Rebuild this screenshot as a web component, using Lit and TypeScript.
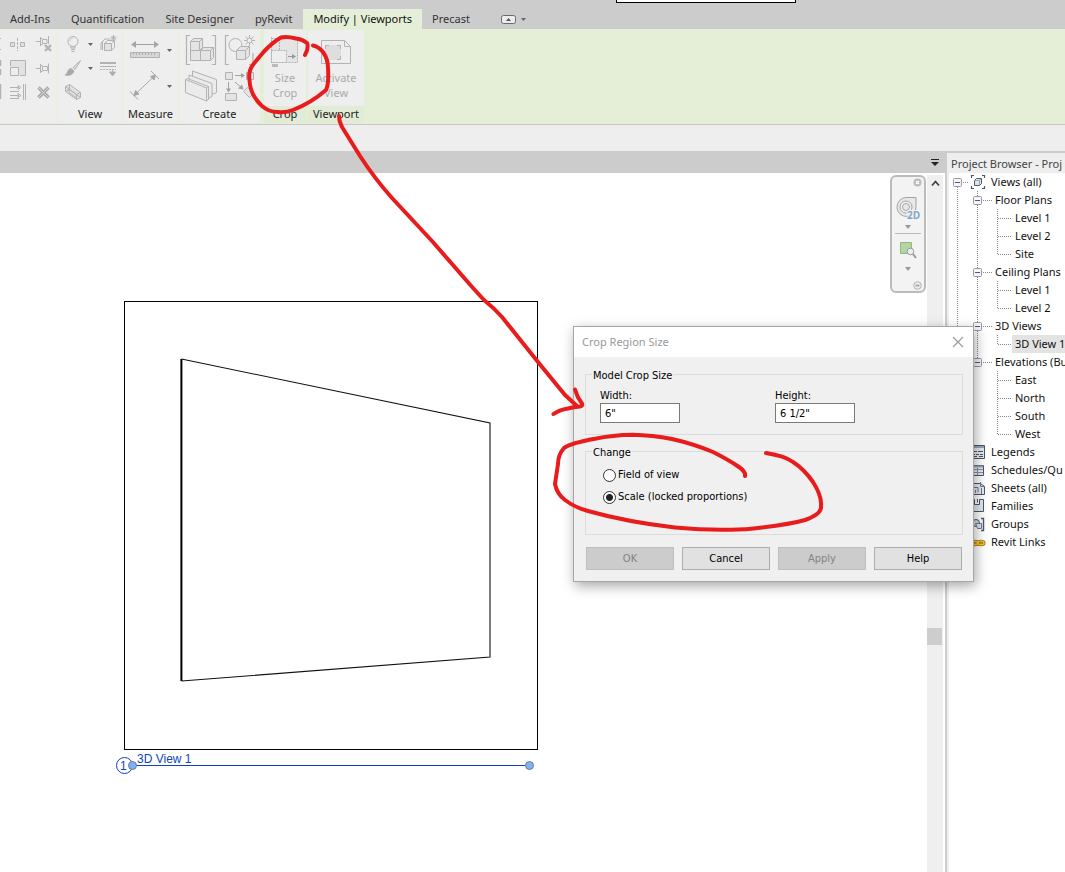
import { LitElement, html, svg, css, nothing } from "lit";
import { customElement, property, state } from "lit/decorators.js";

type Glyph = unknown;
const icon = (w: number, h: number, body: Glyph) =>
  html`<svg width=${w} height=${h} viewBox="0 0 ${w} ${h}" fill="none" stroke="#b2b2b2" aria-hidden="true">${body}</svg>`;

const cube = (x: number, y: number, s: number, d: number, fill = "#e4e4e4") => svg`
  <path d="M${x} ${y + d}l${d} ${-d}h${s}v${s}l${-d} ${d}h${-s}z" fill=${fill}/>
  <path d="M${x} ${y + d}h${s}v${s}M${x + s} ${y + d}l${d} ${-d}"/>`;

const arrow = html`<svg width="5" height="3" viewBox="0 0 5 3" aria-hidden="true"><path d="M0 0h5L2.500 3z" fill="#666"/></svg>`;

/* Ribbon glyphs, small ones on a 18px grid and large ones on a 32px grid */
const I = {
  edge1: icon(5, 18, svg`<path d="M0 3.500h1M0 14.500h1"/>`),
  edge2: icon(5, 18, svg`<path d="M.5 1v6M.5 10v6" stroke-width="1.500"/>`),
  edge3: icon(5, 18, svg`<path d="M.5 1v15" stroke-width="1.500"/>`),
  mirror: icon(18, 18, svg`<path d="M1.500 7.500h4v4h-4zM11.500 7.500h4v4h-4z" fill="#e0e0e0"/><path d="M8.500 3v13" stroke-dasharray="3 1"/>`),
  scale: icon(18, 18, svg`<path d="M1.500 7V1.500h15v15H11" fill="#e2e2e2"/><path d="M1.500 8.500h8v8h-8z" fill="#eee"/>`),
  align: icon(18, 18, svg`<path d="M14.500 1v16M16.500 1v16M1 4.500h9M1 8.500h9M1 12.500h9M1 15.500h9M9 2.500l3 2-3 2zM9 10.500l3 2-3 2z"/>`),
  unpin: icon(18, 18, svg`<path d="M1 6.500h4M5.500 2v9M7.500 4.500h4.500v4h-4.500zM5.500 3.500h2M5.500 9.500h2M13.500 1v8" fill="#eee"/><path d="M10 10l6 6M16 10l-6 6" stroke-width="2.400"/>`),
  pin: icon(18, 18, svg`<path d="M1 9.500h4M5.500 5v9M5.500 6.500h2M5.500 12.500h2M7.500 7.500h5v4h-5zM13.500 4.500v10"/>`),
  del: icon(18, 18, svg`<path d="M3.500 4.500l10 10M13.500 4.500l-10 10" stroke="#aaa" stroke-width="3.600"/><path d="M4 5l9 9M13 5l-9 9" stroke="#d2d2d2"/>`),
  bulb: icon(18, 18, svg`<circle cx="9" cy="6.500" r="5" fill="#eee"/><path d="M7 11v2h4v-2M7 14.500h4M7.500 16.500h3" /><path d="M6 6a3 3 0 0 1 3-3" stroke="#ccc"/>`),
  brush: icon(18, 18, svg`<path d="M16.500 1.500L9 8.500l2 2z" fill="#ddd"/><path d="M1 16c3-1 2-6 6-6.500l3 2.500c-1 4-5 5-9 4z" fill="#a8a8a8"/>`),
  box: icon(18, 18, svg`<path d="M1.500 3.500l4-2 11 8v5l-4 2-11-8z" fill="#e2e2e2"/><path d="M1.500 3.500l11 8v5M12.500 11.500l4-2M5.500 1.500v5l11 8M5 4.500v5l7 5M1.500 8.500l4-2"/>`),
  hide: icon(18, 18, svg`<path d="M5.500 8.500h7v7h-7z" fill="#e2e2e2"/><path d="M5.500 8.500l3-3h7v7l-3 3M12.500 8.500l3-3M2 15V8l4-4h5M14.500 0v6M11.500 3h6M12.500 1l4 4M16.500 1l-4 4M3.500 6v9"/>`),
  thin: icon(18, 18, svg`<path d="M1 4h16" stroke-width="2"/><path d="M1 7.500h16"/><path d="M1 10.500h16" stroke-dasharray="2 1"/><path d="M13.500 10v5M10.500 13l3 4 3-4z" fill="#aaa"/>`),
  ruler: icon(32, 30, svg`<path d="M3 9.500h25" stroke="#a0a0a0"/><path d="M2 9.500l5-3.500v7zM30 9.500l-5-3.500v7z" fill="#a6a6a6" stroke="none"/><path d="M1.500 17.500h29v5h-29z" fill="#d6d6d6"/><path d="M4.500 18v2M7.500 18v2M10.500 18v2M13.500 18v2M16.500 18v2M19.500 18v2M22.500 18v2M25.500 18v2"/>`),
  dim: icon(32, 32, svg`<g stroke="#a6a6a6"><path d="M5 25.500L26 5.500"/><path d="M5 25.500l1.500-5 3.500 3.500zM26.500 5l-5 1.500 3.500 3.500z" fill="#a6a6a6"/><path d="M1 21.500l8 8M22 1l8 8"/></g>`),
  group: icon(32, 32, svg`<path d="M5 1.500H1.500v29H5M27 1.500h3.500v29H27" stroke-width="1.200"/>${cube(5.5, 13.500, 10, 3)}${cube(5.5, 4.500, 9, 3)}${cube(15.5, 13.500, 10, 3)}`),
  similar: icon(32, 32, svg`<path d="M5 1.500H1.500v29H5M25 30.500h4V19" stroke-width="1.200"/><circle cx="11.500" cy="11" r="6.500" fill="#eee"/>${cube(12.5, 12.500, 9, 4)}<path d="M25.500 1v11M20 6.500h11M21.500 2.500l8 8M29.500 2.500l-8 8"/><circle cx="25.500" cy="6.500" r="2.500" fill="#eee"/>`),
  assembly: icon(34, 32, svg`<g fill="#ebebeb" stroke-linejoin="round"><path d="M8.500 1l24 8.500v13l-3 1.500-21-8z"/><path d="M5 5l23 8.500v13l-3 1.500L5 20z"/><path d="M1.500 9.500l2-1 21 8v13l-2 1.500-21-8.500z"/><path d="M1.500 9.500l21 8.500v13M22.500 18l2-1.500"/></g>`),
  parts: icon(34, 32, svg`<path d="M2.500 2.500h7v7h-7zM23.500 2.500h7v7h-7zM2.500 23.500h11v7h-11zM24.500 17.500l6 6-4 4-6-6z" fill="#e4e4e4"/><path d="M12 5.500h9M5.500 12v9M12 12l8 7" stroke="#a0a0a0"/><path d="M18 3l4 2.500-4 2.500zM3 18.500l2.500 4 2.500-4zM19 14.500l1.500 5-5.500-1z" fill="#a0a0a0" stroke="none"/>`),
  sizeCrop: icon(32, 32, svg`<path d="M2.500 2.500h26v24h-26z" fill="#e4e4e4" stroke-dasharray="2 1"/><path d="M2.500 14.500h15v12h-15z" fill="#eee" stroke-dasharray="2 1"/><path d="M10.500 3v11M2.500 1v27" stroke-dasharray="2 1"/><path d="M19 20.500h6" stroke="#999"/><path d="M23 18l4 2.500-4 2.500z" fill="#999" stroke="none"/><path d="M3 28h6v3H3z" fill="#bbb" stroke="none"/>`),
  activate: icon(32, 32, svg`<path d="M1.500 4.500h23l6 6v17h-29z" fill="#eee"/><path d="M24.500 4.500v6h6"/><path d="M5 9h16v15H5z" fill="#dedede" stroke="none"/><path d="M9 9.500H5.500V13M17 9.500h3.500V13M9 23.500H5.500V20M17 23.500h3.500V20"/>`),
};

/* Browser tree glyphs */
const S = "#4c5668";
const tree: Record<string, Glyph> = {
  views: svg`<path d="M4 1.500H1.500V4M12 1.500h2.500V4M4 14.500H1.500V12M12 14.500h2.500V12" stroke=${S} stroke-width="1.200"/><path d="M4.500 6.500l2-2h5v5l-2 2h-5z" fill="#dfe6ee" stroke=${S}/><path d="M4.500 6.500h5v5M9.500 6.500l2-2" stroke="#9aa5b4"/>`,
  legend: svg`<path d="M1.500 1.500h13v13h-13z" fill="#e8ecf2" stroke=${S}/><path d="M2 3h12" stroke="#97a3b3" stroke-width="2"/><path d="M2 7.500h5M8 7.500h5M2 10.500h3M6 10.500h3M10 10.500h3M2 12.500h5M9 12.500h4" stroke=${S}/>`,
  schedule: svg`<path d="M1.500 3.500h12v10h-12z" fill="#e8ecf2" stroke=${S}/><path d="M2 4.500h11" stroke="#97a3b3" stroke-width="2"/><path d="M2 7.500h11M2 10.500h11M7.500 6v7" stroke="#8993a3"/>`,
  sheet: svg`<path d="M1.500 3.500h9l4 3v8h-13z" fill="#e8ecf2" stroke=${S}/><path d="M10.500 2v4.500h4M3 7.500h5v5M5.500 13v-3M11.500 8v6" stroke="#6d7a8d"/>`,
  family: svg`<path d="M1.500 1.500h3v5h5v-5h4v12h-12z" fill="#e4e8ee" stroke=${S}/><path d="M7.500 1v3.500" stroke=${S}/>`,
  group: svg`<path d="M11 2.500h2.500v12H11" stroke=${S} stroke-width="1.400"/><circle cx="6" cy="7" r="3.500" fill="#cfd9e6" stroke=${S}/><path d="M5.500 7.500h6v5h-4z" fill="#dfe6ee" stroke="#6d7a8d"/>`,
  link: svg`<g stroke="#a87400" stroke-width="3"><ellipse cx="4.500" cy="9" rx="3" ry="1.800"/><ellipse cx="11" cy="9" rx="3" ry="1.800"/></g><g stroke="#f7cc3c" stroke-width="1.300"><ellipse cx="4.500" cy="9" rx="3" ry="1.800"/><ellipse cx="11" cy="9" rx="3" ry="1.800"/></g>`,
};

interface Row { t: string; d: number; i?: string; open?: boolean; last?: boolean; sel?: boolean }
const rows: Row[] = [
  { t: "Views (all)", d: 0, i: "views", open: true },
  { t: "Floor Plans", d: 1, open: true },
  { t: "Level 1", d: 2 }, { t: "Level 2", d: 2 }, { t: "Site", d: 2, last: true },
  { t: "Ceiling Plans", d: 1, open: true },
  { t: "Level 1", d: 2 }, { t: "Level 2", d: 2, last: true },
  { t: "3D Views", d: 1, open: true },
  { t: "3D View 1", d: 2, last: true, sel: true },
  { t: "Elevations (Bu", d: 1, open: true },
  { t: "East", d: 2 }, { t: "North", d: 2 }, { t: "South", d: 2 }, { t: "West", d: 2, last: true },
  { t: "Legends", d: 0, i: "legend" },
  { t: "Schedules/Qu", d: 0, i: "schedule" },
  { t: "Sheets (all)", d: 0, i: "sheet" },
  { t: "Families", d: 0, i: "family" },
  { t: "Groups", d: 0, i: "group" },
  { t: "Revit Links", d: 0, i: "link" },
];

@customElement("ribbon-bar")
class RibbonBar extends LitElement {
  static styles = css`
    :host { display: block; color: #333; font: 11px/16px "Noto Sans", "Open Sans", sans-serif; }
    button { font: inherit; color: inherit; background: none; border: 0; margin: 0; padding: 0; }
    svg { display: block; flex: none; }
    .tabs { display: flex; align-items: flex-end; height: 29px; background: #ccc; }
    .tab { height: 20px; padding: 0 11px 0 10px; white-space: nowrap; }
    .tab.on { background: #e5efd7; color: #111; padding: 0 10px; }
    .collapse { display: flex; align-items: center; gap: 5px; height: 19px; margin-left: 20px; }
    .ribbon { display: flex; height: 94px; background: #e5efd7; border-bottom: 1px solid #c8c8c8; padding-top: 1px; }
    .panel { display: flex; flex-direction: column; flex: none; margin: 0 1px 1px 0; background: #eee; }
    .body { display: flex; height: 76px; padding-top: 2px; box-sizing: border-box; }
    .name { margin: 0; text-align: center; font: inherit; color: #222; height: 16px; white-space: nowrap; }
    .context { background: #e2ebd5; }
    .context .body { background: #eee; justify-content: center; }
    .modify .body { display: grid; grid-template-columns: 5px 25px 27px; grid-auto-rows: 24px; align-items: center; justify-items: center; }
    .view .body { display: grid; grid-template-columns: 20px 12px 22px; column-gap: 1px; grid-auto-rows: 24px; padding-left: 5px; align-items: center; justify-items: center; }
    .view { width: 64px; }
    .measure { width: 55px; }
    .measure .body { display: grid; grid-template-columns: 32px 16px; grid-auto-rows: 36px; padding-left: 6px; align-items: center; justify-items: center; }
    .create { width: 81px; }
    .create .body { display: grid; grid-template-columns: 39px 39px; grid-auto-rows: 36px; padding-left: 2px; align-items: center; justify-items: center; }
    .crop { width: 42px; margin-left: 3px; margin-right: 2px; }
    .port { width: 56px; }
    .big { display: flex; flex-direction: column; align-items: center; gap: 2px; padding-top: 4px; height: 73px; line-height: 15px; color: #aaa; }
    .options { height: 26px; background: #eee; }
  `;
  private b(label: string, g: Glyph) {
    return html`<button aria-label=${label} disabled>${g}</button>`;
  }
  render() {
    const tab = (t: string, on = false) => html`<button class="tab ${on ? "on" : ""}">${t}</button>`;
    return html`
      <nav class="tabs">
        ${tab("Add-Ins")}${tab("Quantification")}${tab("Site Designer")}${tab("pyRevit")}${tab("Modify | Viewports", true)}${tab("Precast")}
        <button class="collapse" aria-label="Minimize ribbon">
          <svg width="15" height="10" viewBox="0 0 15 10" aria-hidden="true"><rect x=".5" y=".5" width="14" height="8" rx="2" fill="#ececec" stroke="#666a72"/><path d="M5 6h5L7.500 3z" fill="#555"/></svg>
          ${arrow}
        </button>
      </nav>
      <div class="ribbon">
        <section class="panel modify"><div class="body">
          ${I.edge1}${this.b("Mirror", I.mirror)}${this.b("Unpin", I.unpin)}
          ${I.edge2}${this.b("Scale", I.scale)}${this.b("Pin", I.pin)}
          ${I.edge3}${this.b("Align", I.align)}${this.b("Delete", I.del)}
        </div></section>
        <section class="panel view"><div class="body">
          ${this.b("Hide", I.bulb)}${this.b("Hide options", arrow)}${this.b("Displace", I.hide)}
          ${this.b("Override", I.brush)}${this.b("Override options", arrow)}${this.b("Linework", I.thin)}
          ${this.b("Selection box", I.box)}
        </div><h2 class="name">View</h2></section>
        <section class="panel measure"><div class="body">
          ${this.b("Measure", I.ruler)}${this.b("Measure options", arrow)}
          ${this.b("Dimension", I.dim)}${this.b("Dimension options", arrow)}
        </div><h2 class="name">Measure</h2></section>
        <section class="panel create"><div class="body">
          ${this.b("Group", I.group)}${this.b("Similar", I.similar)}
          ${this.b("Assembly", I.assembly)}${this.b("Parts", I.parts)}
        </div><h2 class="name">Create</h2></section>
        <section class="panel context crop"><div class="body">
          <button class="big" disabled>${I.sizeCrop}<span>Size<br />Crop</span></button>
        </div><h2 class="name">Crop</h2></section>
        <section class="panel context port"><div class="body">
          <button class="big" disabled>${I.activate}<span>Activate<br />View</span></button>
        </div><h2 class="name">Viewport</h2></section>
      </div>
      <div class="options"></div>`;
  }
}

@customElement("project-browser")
class ProjectBrowser extends LitElement {
  static styles = css`
    :host { display: block; overflow: hidden; background: #fff; border-left: 2px solid #ccc; font: 11px/18px "Noto Sans", "Open Sans", sans-serif; color: #111; }
    .title { margin: 0; height: 22px; padding: 0 0 0 4px; box-sizing: border-box; background: #eee; border-top: 2px solid #ccc; font: inherit; line-height: 22px; color: #444; white-space: nowrap; }
    ul { list-style: none; margin: 0; padding: 0; border-left: 2px solid #eee; min-height: 100%; }
    li { display: flex; height: 18px; white-space: nowrap; }
    svg { display: block; flex: none; }
    .sel { background: #e3e3e3; margin-left: -3px; padding: 0 3px; }
  `;
  private lead(r: Row, idx: number) {
    const w = r.d === 0 ? 42 : r.d === 1 ? 46 : 66;
    const end = rows.length - 1;
    const box = (x: number) => svg`<rect x=${x + 0.5} y="5.500" width="8" height="8" rx="1" fill="#f6f6f6" stroke="#999"/><path d="M${x + 2} 9.500h5" stroke="#3b5aa0"/>`;
    return html`<svg width=${w} height="18" viewBox="0 0 ${w} 18" fill="none" aria-hidden="true">
      <g stroke="#888" stroke-dasharray="1 1">
        <path d="M8.500 ${idx === 0 ? 10 : 0}V${idx === end ? 9 : 18}"/>
        ${r.d === 0 ? svg`<path d="M14 9.500h6"/>` : nothing}
        ${r.d > 0 && idx <= 10 ? svg`<path d="M28.500 0V${idx === 10 ? 9 : 18}"/>` : nothing}
        ${r.d === 1 ? svg`<path d="M34 9.500h9"/>` : nothing}
        ${r.d === 2 ? svg`<path d="M48.500 0V${r.last ? 9 : 18}M49 9.500h14"/>` : nothing}
      </g>
      ${r.open ? box(r.d === 0 ? 4 : 24) : nothing}
      ${r.i ? svg`<g transform="translate(21 1)">${tree[r.i]}</g>` : nothing}
    </svg>`;
  }
  render() {
    return html`<h2 class="title">Project Browser - Proj</h2>
      <ul>${rows.map((r, i) => html`<li>${this.lead(r, i)}<span class=${r.sel ? "sel" : ""}>${r.t}</span></li>`)}</ul>`;
  }
}

@customElement("crop-dialog")
class CropDialog extends LitElement {
  @state() private mode = "scale";
  @property() heading = "Crop Region Size";
  static styles = css`
    :host { display: block; box-sizing: border-box; border: 1px solid #a6a6a6; background: #f0f0f0; box-shadow: 2px 4px 12px rgba(0,0,0,.35); font: 11px/14px "DejaVu Sans Condensed", "Open Sans", sans-serif; color: #000; }
    header { display: flex; align-items: center; justify-content: space-between; height: 30px; padding: 0 9px 0 8px; background: #fff; color: #999; }
    h1 { margin: 0; font: 11px/16px "Noto Sans", "Open Sans", sans-serif; }
    .close { border: 0; background: none; padding: 0; }
    svg { display: block; }
    form { display: flex; flex-direction: column; padding: 9px 10px 11px 11px; }
    fieldset { margin: 0; padding: 0 14px; border: 1px solid #dcdcdc; min-width: 0; }
    legend { margin-left: -8px; padding: 3px 1px 0; }
    .size { display: grid; grid-template-columns: 175px 1fr; height: 51px; box-sizing: border-box; }
    .cell { display: flex; flex-direction: column; align-items: flex-start; padding-top: 6px; }
    input[type="text"] { width: 80px; height: 20px; box-sizing: border-box; border: 1px solid #7a7a7a; background: #fff; font: inherit; padding: 0 4px; margin: 0; color: #000; }
    .change { margin-top: 8px; height: 92px; box-sizing: border-box; }
    .opt { display: flex; align-items: center; gap: 2px; height: 22px; margin-left: 3px; }
    .opts { padding-top: 4px; }
    input[type="radio"] { appearance: none; width: 13px; height: 13px; margin: 0; border: 1px solid #333; border-radius: 50%; background: #fff; }
    input[type="radio"]:checked { background: radial-gradient(circle, #222 0 3px, #fff 4px); }
    .actions { display: grid; grid-template-columns: repeat(4, 1fr); gap: 8px; margin: 12px 1px 0; }
    .actions button { height: 23px; padding: 0; font: inherit; color: #000; background: #e1e1e1; border: 1px solid #adadad; }
    .actions button:disabled { background: #ccc; color: #838383; border-color: #bfbfbf; }
  `;
  render() {
    const opt = (v: string, t: string) => html`<label class="opt"><input type="radio" name="change" .checked=${this.mode === v} @change=${() => (this.mode = v)} />${t}</label>`;
    return html`
      <header><h1>${this.heading}</h1>
        <button class="close" aria-label="Close"><svg width="12" height="12" viewBox="0 0 12 12" aria-hidden="true"><path d="M1 1l10 10M11 1L1 11" stroke="#999" stroke-width="1.100"/></svg></button>
      </header>
      <form @submit=${(e: Event) => e.preventDefault()}>
        <fieldset><legend>Model Crop Size</legend>
          <div class="size">
            <div class="cell"><label for="w">Width:</label><input id="w" type="text" value='6"' /></div>
            <div class="cell"><label for="h">Height:</label><input id="h" type="text" value='6 1/2"' /></div>
          </div>
        </fieldset>
        <fieldset class="change"><legend>Change</legend>
          <div class="opts">${opt("fov", "Field of view")}${opt("scale", "Scale (locked proportions)")}</div>
        </fieldset>
        <div class="actions">
          <button disabled>OK</button><button>Cancel</button><button disabled>Apply</button><button>Help</button>
        </div>
      </form>`;
  }
}

@customElement("app-root")
class AppRoot extends LitElement {
  static styles = css`
    :host { display: block; position: relative; overflow: hidden; min-height: 100vh; background: #fff; }
    svg { display: block; }
    .page { display: flex; flex-direction: column; min-height: 100vh; }
    .main { display: grid; grid-template-columns: 1fr 120px; flex: 1; }
    .doc { display: flex; flex-direction: column; min-width: 0; }
    .doctabs { display: flex; justify-content: flex-end; align-items: center; height: 22px; padding-right: 5px; background: #ccc; }
    .doctabs button, .scroll button, .nav button { border: 0; background: none; padding: 0; margin: 0; }
    .work { display: flex; flex: 1; }
    .canvas { position: relative; flex: 1; min-width: 0; }
    .scroll { display: flex; flex-direction: column; align-items: center; width: 16px; margin: 2px 2px 0 0; padding-top: 5px; box-sizing: border-box; background: #efefef; }
    .thumb { width: 15px; height: 17px; margin-top: 441px; align-self: flex-start; background: #cdcdcd; }
    .sheet { position: absolute; left: 110px; top: 120px; }
    .sheet text { font: 12px "Liberation Sans", Arial, sans-serif; fill: #1044b8; }
    .nav { position: absolute; right: 1px; top: 2px; display: flex; flex-direction: column; align-items: center; box-sizing: border-box; width: 36px; height: 118px; border: 2px solid #bbb; border-radius: 6px; background: #f3f3f3; padding: 1px 2px; }
    .nav .corner { align-self: flex-end; }
    .nav .wheel { margin-top: 8px; }
    .nav hr { width: 26px; margin: 4px 0 7px; border: 0; border-top: 1px solid #bbb; }
    .nav .more { margin-top: 4px; }
    .nav .zoom { margin-bottom: 4px; }
    .nav .bottom { margin-top: auto; }
    .nav text { font: bold 10px "Open Sans", sans-serif; fill: #7ea6cc; }
    .tip { position: absolute; top: 0; left: 616px; width: 180px; height: 3px; box-sizing: border-box; border: 1px solid #000; border-top: 0; background: #fff; }
    crop-dialog { position: absolute; left: 573px; top: 326px; width: 401px; }
    .ink { position: absolute; left: 0; top: 0; pointer-events: none; }
  `;
  render() {
    const tri = html`<svg width="6" height="4" viewBox="0 0 6 4" aria-hidden="true"><path d="M0 0h6L3 4z" fill="#999"/></svg>`;
    return html`
      <div class="page">
        <ribbon-bar></ribbon-bar>
        <div class="main">
          <div class="doc">
            <div class="doctabs"><button aria-label="Open views"><svg width="10" height="8" viewBox="0 0 10 8" aria-hidden="true"><path d="M1 1.500h8" stroke="#222"/><path d="M1 4h8L5 8z" fill="#222"/></svg></button></div>
            <div class="work">
              <div class="canvas">
                <svg class="sheet" width="450" height="490" viewBox="110 293 450 490" fill="none">
                  <rect x="124.500" y="301.500" width="413" height="448" stroke="#000"/>
                  <path d="M181.500 359L490 423V657L181.500 681" stroke="#111" stroke-width="1.100"/>
                  <path d="M181.400 359V681" stroke="#000" stroke-width="2"/>
                  <circle cx="124.500" cy="765.500" r="8" stroke="#1044b8"/>
                  <text x="120" y="770">1</text>
                  <text x="137" y="763">3D View 1</text>
                  <path d="M132 765.500h397" stroke="#1044b8"/>
                  <circle cx="132.500" cy="765.500" r="4" fill="#7fb2f4" stroke="#6b7b90"/>
                  <circle cx="529.500" cy="765.500" r="4" fill="#7fb2f4" stroke="#6b7b90"/>
                </svg>
                <div class="nav">
                  <button class="corner" aria-label="Close navigation bar"><svg width="9" height="9" viewBox="0 0 9 9" aria-hidden="true"><circle cx="4.500" cy="4.500" r="4" fill="#bbb"/><path d="M3 3l3 3M6 3L3 6" stroke="#fff" stroke-width="1.200"/></svg></button>
                  <button class="wheel" aria-label="Steering wheel"><svg width="26" height="26" viewBox="0 0 26 26" fill="none" aria-hidden="true"><path d="M11 2.500h10v9a9.500 9.500 0 1 1-10-9z" fill="#e8e8e8" stroke="#a2a2a2"/><circle cx="11" cy="12" r="6" fill="#f3f3f3" stroke="#a2a2a2"/><circle cx="11" cy="12" r="3.500" fill="#e8e8e8" stroke="#a2a2a2"/><text x="12" y="24" stroke="#f3f3f3" stroke-width="2" paint-order="stroke">2D</text></svg></button>
                  <button class="more" aria-label="Wheel options">${tri}</button>
                  <hr />
                  <button class="zoom" aria-label="Zoom region"><svg width="18" height="18" viewBox="0 0 18 18" fill="none" aria-hidden="true"><path d="M1.500 1.500h11v11h-11z" fill="#b3d4a5" stroke="#8dba7c"/><circle cx="11.500" cy="10.500" r="3.300" fill="#eee" stroke="#999"/><path d="M14 13l3 4" stroke="#999" stroke-width="2"/></svg></button>
                  <button class="more" aria-label="Zoom options">${tri}</button>
                  <button class="corner bottom" aria-label="Navigation bar settings"><svg width="9" height="9" viewBox="0 0 9 9" aria-hidden="true"><circle cx="4.500" cy="4.500" r="3.800" fill="#eee" stroke="#b0b0b0"/><path d="M2.500 4.500h4" stroke="#aaa" stroke-width="2"/></svg></button>
                </div>
              </div>
              <div class="scroll">
                <button aria-label="Scroll up"><svg width="9" height="7" viewBox="0 0 9 7" fill="none" aria-hidden="true"><path d="M1 5.500l3.500-4 3.500 4" stroke="#444" stroke-width="1.800"/></svg></button>
                <div class="thumb"></div>
              </div>
            </div>
          </div>
          <project-browser></project-browser>
        </div>
      </div>
      <div class="tip"></div>
      <crop-dialog></crop-dialog>
      <svg class="ink" width="1065" height="872" viewBox="0 0 1065 872" fill="none" stroke="#e81c1c" stroke-width="4" stroke-linecap="round" stroke-linejoin="round" aria-hidden="true">
        <path d="M305 55Q309 48 307 43Q302 39 296 38.500Q287 36 281 37.500Q273 42 264 51.500L253.500 64Q248 71 249.500 80Q250 95 262 106Q269 112 277 112Q286 113 293 110Q311 103 326 90Q329 84 328 68Q328 59 323 52Q319 47 313 45.500"/>
        <path d="M339 116Q339 121 342 127L360 156Q375 179 392 198L432 241L473 288L484 300Q494 308 502 317L538 362L565 395L577 406M575 389.500Q577 397 582 403.500Q583 406 580 406.500Q573 407 568 408.500Q559 410 553.500 414"/>
        <path d="M745 476Q746 472 739 467Q729 460 713 452Q694 444 672 439Q652 435 633 434.700Q612 435 595 438.700Q571 443 564 448Q558 455 558 464L555 484Q557 494 565 500Q574 507 588 511Q627 522 675 527.500Q702 530 728 529.700Q743 530 762 527.500Q791 524 805 520Q822 514 821 506Q822 496 813 482Q804 469 793 462Q785 456 766 453"/>
      </svg>`;
  }
}
